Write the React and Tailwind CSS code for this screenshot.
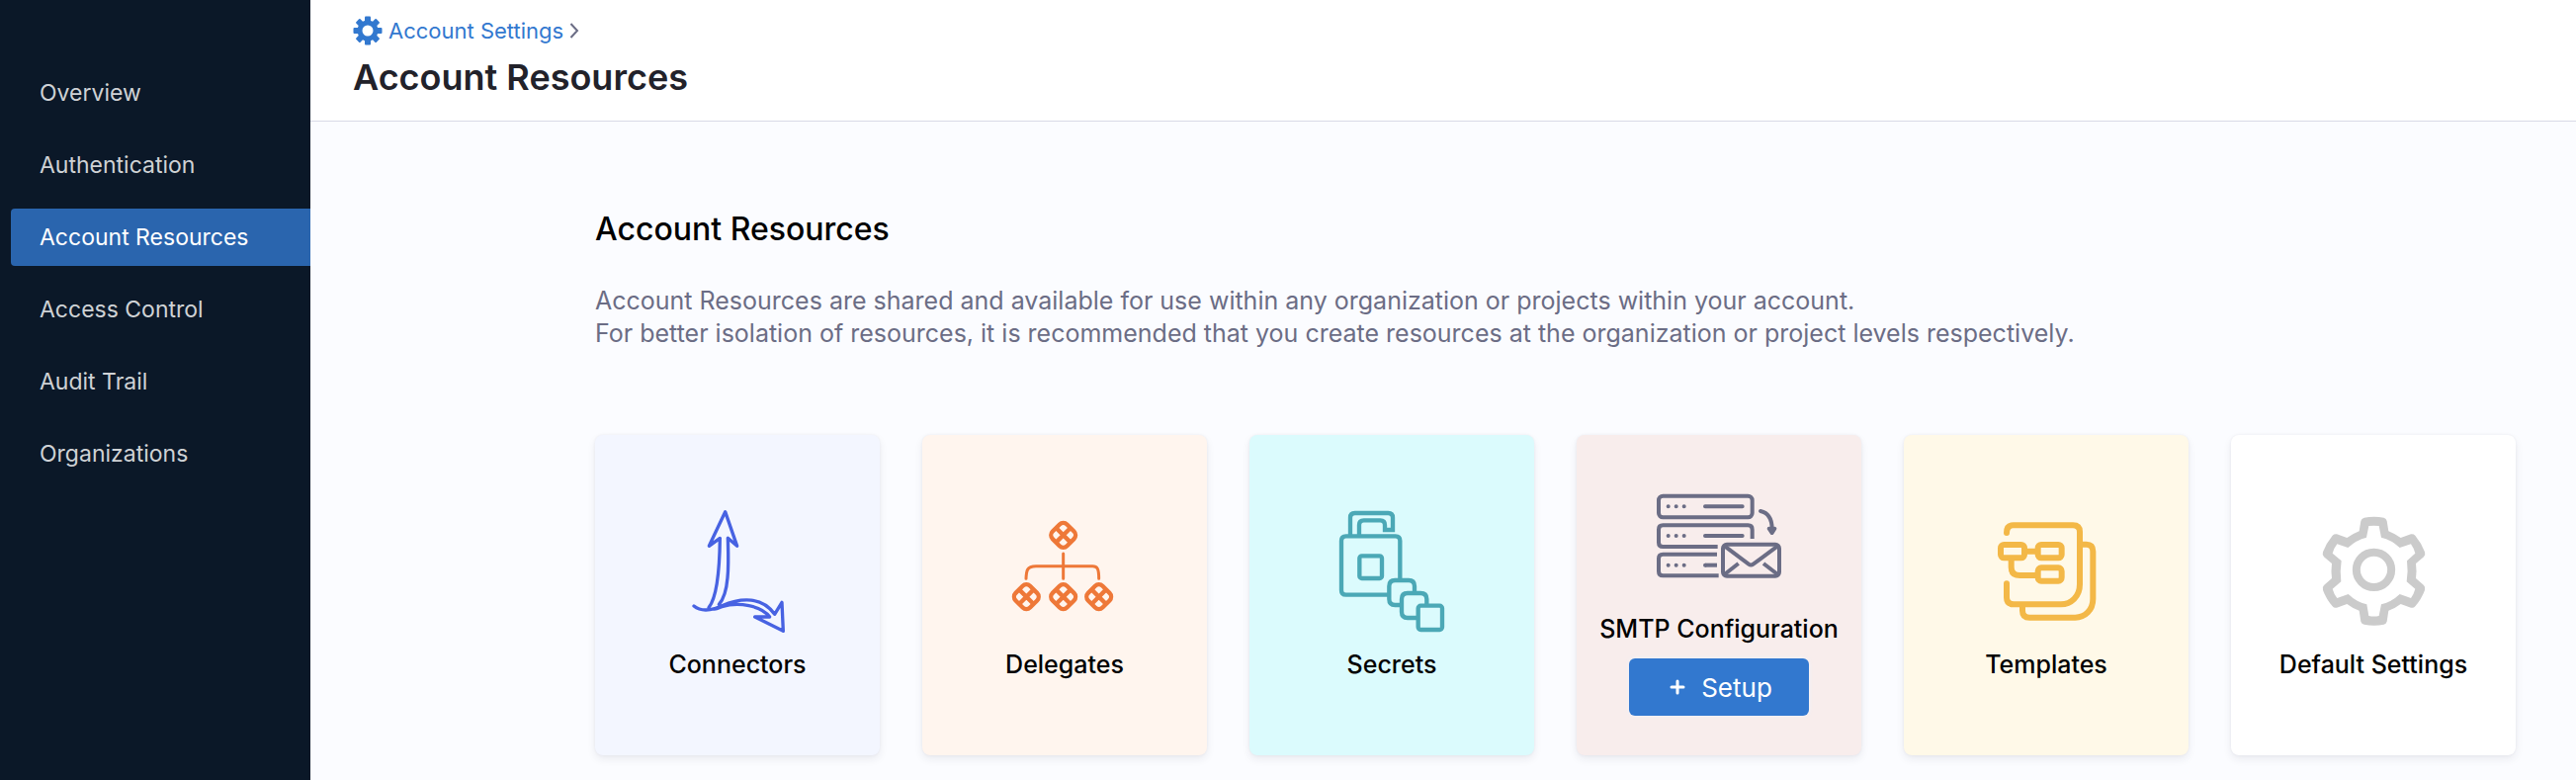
const NAV = [
  { label: 'Overview' },
  { label: 'Authentication' },
  { label: 'Account Resources', active: true },
  { label: 'Access Control' },
  { label: 'Audit Trail' },
  { label: 'Organizations' },
]

function ConnectorsIcon() {
  return (
    <svg viewBox="257 231 420 420" className="size-[140px]" fill="none" stroke="#4762e2" strokeWidth="10" strokeLinecap="round" strokeLinejoin="round" aria-hidden="true">
      <path d="M335 546C352 560 376 560 398 554C405 552 412 548 420 545C480 520 542 518 580 571L602 535L606 622L520 579H565C540 545 470 532 420 548C410 552 404 556 396 555" />
      <path d="M380 551C405 520 413 440 414 340L381 364L430 260L466 364L438 340C439 375 441 420 437 460C434 495 428 522 411 541" />
    </svg>
  )
}

function DelegateNode({ x, y }) {
  return (
    <g transform={`translate(${x} ${y}) rotate(45)`}>
      <rect x="-31" y="-31" width="62" height="62" rx="16" />
      <path d="M0-31V31M-31 0H31" />
    </g>
  )
}

function DelegatesIcon() {
  return (
    <svg viewBox="261 231 420 420" className="size-[140px]" fill="none" stroke="#ee7838" strokeWidth="13" aria-hidden="true">
      <DelegateNode x={467} y={331} />
      <DelegateNode x={355} y={518} />
      <DelegateNode x={467} y={518} />
      <DelegateNode x={575} y={518} />
      <path d="M467 387V463M354 463C355 440 356 425 384 425H556C570 425 575 432 575 463" strokeWidth="9" strokeLinecap="round" />
    </svg>
  )
}

function SecretsIcon() {
  return (
    <svg viewBox="264 231 420 420" className="size-[140px]" fill="none" stroke="#4ba8b6" strokeWidth="13" aria-hidden="true">
      <path d="M348 332V278Q348 264 362 264H463Q477 264 477 278V315H453V300Q453 286 439 286H389Q375 286 375 300V332" />
      <path d="M466 512H335Q321 512 321 498V348Q321 334 335 334H485Q499 334 499 348V462" />
      <rect x="376" y="394" width="68" height="68" rx="7" />
      <path d="M504 543H484Q466 543 466 525V486Q466 468 484 468H525Q543 468 543 486V506" />
      <path d="M552 582H522Q504 582 504 564V525Q504 507 522 507H561Q580 507 580 525V543" />
      <rect x="554" y="545" width="73" height="73" rx="8" />
    </svg>
  )
}

function SmtpIcon() {
  return (
    <svg viewBox="267 123 420 420" className="size-[140px]" fill="none" stroke="#6b6d85" strokeWidth="12" aria-hidden="true">
      <rect x="294" y="212" width="284" height="65" rx="13" />
      <path d="M473 366H307Q294 366 294 353V314Q294 301 307 301H565Q578 301 578 314V342" />
      <path d="M471 389H307Q294 389 294 402V441Q294 454 307 454H476" />
      <g strokeLinecap="round">
        <path d="M435 244H548M435 333H548" />
        <path d="M323 244h.1M347 244h.1M371 244h.1M323 333h.1M347 333h.1M371 333h.1M323 422h.1M347 422h.1M371 422h.1" />
        <path d="M603 258C630 264 638 288 638 312" />
      </g>
      <path d="M471 422H435" />
      <circle cx="435" cy="422" r="6" fill="#6b6d85" stroke="none" />
      <path d="M629 311L638 324L646 311Z" strokeLinejoin="round" fill="#6b6d85" />
      <rect x="489" y="359" width="171" height="96" rx="12" />
      <path d="M494 364L567 419Q574 424 581 419L655 364M494 450L536 417M655 450L612 417" />
    </svg>
  )
}

function TemplatesIcon() {
  return (
    <svg viewBox="270 231 420 420" className="size-[140px]" fill="none" stroke="#f3b847" strokeWidth="18" strokeLinecap="round" aria-hidden="true">
      <path d="M360 324Q360 301 380 301H561Q582 301 582 321V480C582 518 555 541 525 541H382Q360 541 360 520V478" />
      <path d="M586 359H602Q622 359 622 380V525C622 558 598 581 568 581H430Q408 581 408 560V548" />
      <rect x="342" y="360" width="72" height="40" rx="10" />
      <rect x="455" y="360" width="72" height="40" rx="10" />
      <rect x="455" y="430" width="72" height="40" rx="10" />
      <path d="M416 380H452M374 404V428Q374 453 400 453H452" />
    </svg>
  )
}

function DefaultSettingsIcon() {
  return (
    <svg viewBox="276 231 420 420" className="size-[140px]" fill="#cbcbcb" fillRule="evenodd" aria-hidden="true">
      <path d="M458 278Q488 272 518 278Q525 280 527 288L532 319Q552 327 569 339L600 328Q608 327 613 332Q632 355 642 382Q645 391 639 397L615 417Q618 440 615 462L639 483Q645 489 642 498Q632 525 613 547Q608 553 600 551L569 540Q552 553 532 560L527 593Q525 600 518 602Q488 608 458 602Q450 600 448 593L443 560Q423 553 406 540L375 551Q367 553 362 547Q343 525 333 498Q330 489 336 483L360 462Q357 440 360 417L336 397Q330 391 333 382Q343 355 362 332Q367 327 375 328L406 339Q423 327 443 319L448 288Q450 280 458 278ZM472 303L465 338Q435 345 409 369L376 358Q366 371 362 386L389 409Q384 440 388 472L362 494Q366 509 376 522L410 510Q435 534 466 541L472 576Q488 579 503 576L510 541Q541 534 566 510L600 522Q609 509 613 494L587 472Q592 440 588 409L613 386Q609 371 600 358L566 369Q541 345 510 338L503 303Q488 301 472 303Z" />
      <circle cx="487.500" cy="436" r="53" fill="none" stroke="#cbcbcb" strokeWidth="24" />
    </svg>
  )
}

function GearIcon() {
  return (
    <svg viewBox="0 0 30 30" className="size-[30px]" fill="#3278cf" aria-hidden="true">
      <path fillRule="evenodd" d="M15 4.500a10.500 10.500 0 1 0 0 21a10.500 10.500 0 1 0 0-21ZM15 9.500a5.500 5.500 0 1 1 0 11a5.500 5.500 0 1 1 0-11Z" />
      {[0, 45, 90, 135, 180, 225, 270, 315].map((angle) => (
        <rect key={angle} x="12" y="0.500" width="6" height="6" rx="1" transform={`rotate(${angle} 15 15)`} />
      ))}
    </svg>
  )
}

const CARDS = [
  { label: 'Connectors', Icon: ConnectorsIcon, color: 'bg-[#f3f6ff]' },
  { label: 'Delegates', Icon: DelegatesIcon, color: 'bg-[#fff5ee]' },
  { label: 'Secrets', Icon: SecretsIcon, color: 'bg-[#dbfbfd]' },
  { label: 'SMTP Configuration', Icon: SmtpIcon, color: 'bg-[#f8edec]', setup: true },
  { label: 'Templates', Icon: TemplatesIcon, color: 'bg-[#fff9e8]' },
  { label: 'Default Settings', Icon: DefaultSettingsIcon, color: 'bg-white' },
]

function ResourceCard({ label, Icon, color, setup }) {
  return (
    <li className={`flex h-[324px] flex-col items-center justify-center rounded-lg shadow-[0_4px_8px_rgba(40,41,61,0.08),0_0_3px_rgba(40,41,61,0.06)] ${color}`}>
      <Icon />
      <h3 className="my-2 text-[25px] leading-8 font-medium whitespace-nowrap text-black">{label}</h3>
      {setup && (
        <button type="button" className="mt-1.5 mb-2 flex h-[58px] w-[182px] items-center justify-center gap-4 rounded-md bg-[#3278cf] pl-1 text-[26px] text-white shadow-[0_0_4px_rgba(240,244,255,0.9)]">
          <svg viewBox="0 0 16 16" className="size-4" stroke="currentColor" strokeWidth="3" strokeLinecap="round" aria-hidden="true">
            <path d="M8 2V14M2 8H14" />
          </svg>
          Setup
        </button>
      )}
    </li>
  )
}

export default function App() {
  return (
    <div className="flex min-h-screen bg-[#fbfcff] font-[Inter,sans-serif]">
      <nav aria-label="Account settings" className="w-[314px] shrink-0 bg-[#0b1828] pt-[65px] pl-[11px]">
        <ul className="flex flex-col gap-[15px]">
          {NAV.map(({ label, active }) => (
            <li key={label}>
              <a
                href="#"
                aria-current={active ? 'page' : undefined}
                className={`flex h-[58px] items-center rounded-l pl-[29px] text-[23px] ${active ? 'bg-[#2a65ae] text-white' : 'text-[#cfd2d5]'}`}
              >
                {label}
              </a>
            </li>
          ))}
        </ul>
      </nav>
      <div className="min-w-0 flex-1">
        <header className="border-b border-[#d9dae6] bg-white pt-[15px] pb-[22px] pl-[43px]">
          <div className="flex h-8 items-center gap-1.5">
            <GearIcon />
            <a href="#" className="text-[22px] text-[#3278cf]">Account Settings</a>
            <svg viewBox="0 0 10 16" className="h-4 w-2.5" fill="none" stroke="#6b6d85" strokeWidth="2" aria-hidden="true">
              <path d="M1.500 1L8 8L1.500 15" />
            </svg>
          </div>
          <h1 className="mt-[9px] text-4xl leading-[44px] font-semibold text-[#22222a]">Account Resources</h1>
        </header>
        <main className="pt-[87px] pr-[61px] pb-6 pl-72">
          <h2 className="text-[32px] leading-[44px] font-medium text-black">Account Resources</h2>
          <p className="mt-[34px] text-[25px] leading-[33px] text-[#6b6d85]">
            Account Resources are shared and available for use within any organization or projects within your account.
            <br />
            For better isolation of resources, it is recommended that you create resources at the organization or project levels respectively.
          </p>
          <ul className="mt-[86px] grid grid-cols-6 gap-[43px]">
            {CARDS.map((card) => (
              <ResourceCard key={card.label} {...card} />
            ))}
          </ul>
        </main>
      </div>
    </div>
  )
}
